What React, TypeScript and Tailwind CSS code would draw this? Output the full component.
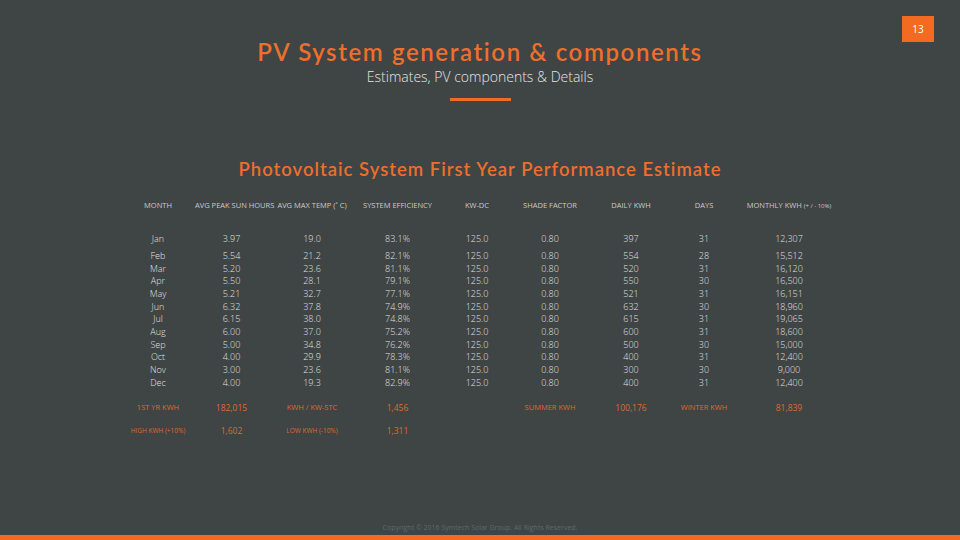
import React from "react";

const cols = "grid grid-cols-[74px_73px_88px_83px_76px_70px_92px_54px_116px] pl-[121px] text-center";

const rows = [
  ["Jan", "3.97", "19.0", "83.1%", "125.0", "0.80", "397", "31", "12,307"],
  ["Feb", "5.54", "21.2", "82.1%", "125.0", "0.80", "554", "28", "15,512"],
  ["Mar", "5.20", "23.6", "81.1%", "125.0", "0.80", "520", "31", "16,120"],
  ["Apr", "5.50", "28.1", "79.1%", "125.0", "0.80", "550", "30", "16,500"],
  ["May", "5.21", "32.7", "77.1%", "125.0", "0.80", "521", "31", "16,151"],
  ["Jun", "6.32", "37.8", "74.9%", "125.0", "0.80", "632", "30", "18,960"],
  ["Jul", "6.15", "38.0", "74.8%", "125.0", "0.80", "615", "31", "19,065"],
  ["Aug", "6.00", "37.0", "75.2%", "125.0", "0.80", "600", "31", "18,600"],
  ["Sep", "5.00", "34.8", "76.2%", "125.0", "0.80", "500", "30", "15,000"],
  ["Oct", "4.00", "29.9", "78.3%", "125.0", "0.80", "400", "31", "12,400"],
  ["Nov", "3.00", "23.6", "81.1%", "125.0", "0.80", "300", "30", "9,000"],
  ["Dec", "4.00", "19.3", "82.9%", "125.0", "0.80", "400", "31", "12,400"],
];

export default function App() {
  return (
    <div className="relative w-[960px] h-[540px] bg-[#3f4444] flex flex-col font-['Open_Sans',sans-serif] overflow-hidden">
      {/* page number */}
      <div className="absolute left-[902px] top-[16px] w-[32px] h-[26px] bg-[#f26b21] flex items-center justify-center text-white text-[10px]">
        13
      </div>

      <h1 className="pt-[38px] text-center text-[24px] leading-[28px] font-semibold text-[#ee6f2b] font-['Lato',sans-serif] tracking-[1.6px]">
        PV System generation &amp; components
      </h1>
      <p className="mt-[2px] text-center text-[14px] leading-[18px] text-[#e6e6e6] font-light">
        Estimates, PV components &amp; Details
      </p>
      <div className="mt-[12px] mx-auto w-[61px] h-[3px] bg-[#f26b21]" />

      <h2 className="mt-[56px] text-center text-[18.5px] leading-[24px] font-semibold text-[#ee6f2b] font-['Lato',sans-serif] tracking-[1px]">
        Photovoltaic System First Year Performance Estimate
      </h2>

      <div className={`${cols} mt-[18px] text-[7.5px] leading-[12px] text-[#c9cbcb] whitespace-nowrap`}>
        <div>MONTH</div>
        <div>AVG PEAK SUN HOURS</div>
        <div>AVG MAX TEMP (˚ C)</div>
        <div>SYSTEM EFFICIENCY</div>
        <div>KW-DC</div>
        <div>SHADE FACTOR</div>
        <div>DAILY KWH</div>
        <div>DAYS</div>
        <div>
          MONTHLY KWH <span className="text-[6px]">(+ / - 10%)</span>
        </div>
      </div>

      <div className="mt-[21px] flex flex-col text-[9px] text-[#e0e0e0] font-light">
        {rows.map((r, i) => (
          <div key={r[0]} className={`${cols} h-[12.7px] leading-[12.7px] ${i === 0 ? "mb-[4.3px]" : ""}`}>
            {r.map((c, j) => (
              <div key={j}>{c}</div>
            ))}
          </div>
        ))}
      </div>

      <div className={`${cols} mt-[11px] h-[13px] leading-[13px] text-[#dc6c31] whitespace-nowrap`}>
        <div className="text-[7.5px]">1ST YR KWH</div>
        <div className="text-[8.5px]">182,015</div>
        <div className="text-[7.5px]">KWH / KW-STC</div>
        <div className="text-[8.5px]">1,456</div>
        <div />
        <div className="text-[7.5px]">SUMMER KWH</div>
        <div className="text-[8.5px]">100,176</div>
        <div className="text-[7.5px]">WINTER KWH</div>
        <div className="text-[8.5px]">81,839</div>
      </div>
      <div className={`${cols} mt-[10px] h-[13px] leading-[13px] text-[#dc6c31] whitespace-nowrap`}>
        <div className="text-[6.5px]">HIGH KWH (+10%)</div>
        <div className="text-[8.5px]">1,602</div>
        <div className="text-[6.5px]">LOW KWH (-10%)</div>
        <div className="text-[8.5px]">1,311</div>
      </div>

      <p className="mt-auto text-center text-[7px] leading-[10px] text-[#626868] mb-[2px]">
        Copyright © 2016 Symtech Solar Group. All Rights Reserved.
      </p>
      <div className="h-[5px] bg-[#f26b21]" />
    </div>
  );
}
